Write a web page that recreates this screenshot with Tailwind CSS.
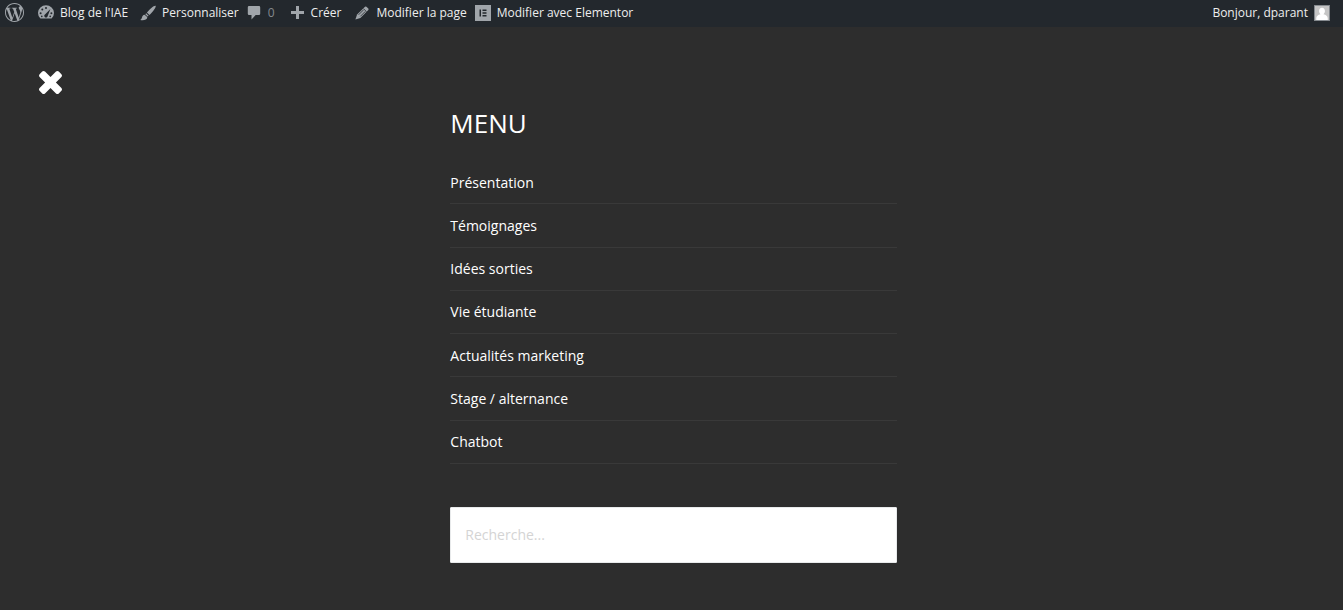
<!DOCTYPE html>
<html lang="fr">
<head>
<meta charset="utf-8">
<meta name="viewport" content="width=device-width, initial-scale=1">
<title>Blog de l'IAE</title>
<script src="https://cdn.jsdelivr.net/npm/@tailwindcss/browser@4"></script>
</head>
<body class="min-h-screen bg-[#2d2d2d] font-['Open_Sans','Noto_Sans',sans-serif] text-white">
<header class="flex h-[27px] items-center justify-between bg-[#23282d] pr-[13px] pl-[5px] text-[12px] leading-[26px] text-[#eee]">
  <nav aria-label="Administration" class="flex h-full items-center whitespace-nowrap">
    <a href="#" aria-label="WordPress" class="mr-[14px] block pb-[2px]">
      <svg class="size-[19px] fill-[#a0a5aa]" viewBox="0 0 24 24"><path d="M21.469 6.825c.84 1.537 1.318 3.3 1.318 5.175 0 3.979-2.156 7.456-5.363 9.325l3.295-9.527c.615-1.54.82-2.771.82-3.864 0-.405-.026-.78-.07-1.11m-7.981.105c.647-.03 1.232-.105 1.232-.105.582-.075.514-.93-.067-.899 0 0-1.755.135-2.88.135-1.064 0-2.85-.15-2.85-.15-.585-.03-.661.855-.075.885 0 0 .54.061 1.125.09l1.68 4.605-2.37 7.08L5.354 6.9c.649-.03 1.234-.1 1.234-.1.585-.075.516-.93-.065-.896 0 0-1.746.138-2.874.138-.2 0-.438-.008-.69-.015C4.911 3.15 8.235 1.215 12 1.215c2.809 0 5.365 1.072 7.286 2.833-.046-.003-.091-.009-.141-.009-1.06 0-1.812.923-1.812 1.914 0 .89.513 1.643 1.06 2.531.411.72.89 1.643.89 2.977 0 .915-.354 1.994-.821 3.479l-1.075 3.585-3.9-11.61.001.014zM12 22.784c-1.059 0-2.081-.153-3.048-.437l3.237-9.406 3.315 9.087c.024.053.05.101.078.149-1.12.393-2.325.609-3.582.609M1.211 12c0-1.564.336-3.05.935-4.39L7.29 21.709C3.694 19.96 1.212 16.271 1.211 12M12 0C5.385 0 0 5.385 0 12s5.385 12 12 12 12-5.385 12-12S18.615 0 12 0"/></svg>
    </a>
    <a href="#" class="mr-3 flex h-full items-center gap-[6px] pb-[2px]">
      <svg class="h-4 w-4" viewBox="0 0 16 16"><path fill="#a0a5aa" d="M2.2 13.200A8 7.600 0 1 1 13.800 13.200Q13.500 13.600 13 13.600H3Q2.500 13.600 2.200 13.200z"/><g fill="#23282d"><circle cx="8" cy="3" r="1"/><circle cx="4.3" cy="4.5" r="1"/><circle cx="2.6" cy="8.2" r="1"/><circle cx="13.4" cy="8.2" r="1"/><circle cx="3.8" cy="11.4" r=".8"/><circle cx="12.2" cy="11.4" r=".8"/><path d="M12.4 3.900 9.6 11.200A1.7 1.7 0 1 1 7 9.400z"/></g></svg>
      <span>Blog de l'IAE</span>
    </a>
    <a href="#" class="mr-2 flex h-full items-center gap-[6px] pb-[2px]">
      <svg class="h-4 w-4 fill-[#a0a5aa]" viewBox="0 0 16 16"><path d="M15.6.8C14.6-.1 9.600 4 6.900 7.500L9.400 10C12.800 6.800 16.500 1.800 15.600.8zM6.200 8.300 8.600 10.700 7.700 11.600 5.300 9.300zM4.600 9.800C2.900 9.800 2.300 11.200 2 12.600 1.700 13.700 1.100 14.500.3 14.900 3 15.600 7.600 15 7.200 12.100z"/></svg>
      <span>Personnaliser</span>
    </a>
    <a href="#" aria-label="0 commentaire" class="mr-4 flex h-full items-center gap-[7px] pb-[2px]">
      <svg class="h-[15px] w-[14px] fill-[#a0a5aa]" viewBox="0 0 14 15"><path d="M2 1h10q1.200 0 1.200 1.300v6.500Q13.200 10 12 10H8.700L4.500 14.500V10H2Q.8 10 .8 8.800V2.300Q.8 1 2 1z"/></svg>
      <span class="text-[#84898e]">0</span>
    </a>
    <a href="#" class="mr-[14px] flex h-full items-center gap-[7px] pb-[2px]">
      <svg class="size-[13px] fill-[#a0a5aa]" viewBox="0 0 13 13"><path d="M5 0h3v5h5v3H8v5H5V8H0V5h5z"/></svg>
      <span>Créer</span>
    </a>
    <a href="#" class="mr-2 flex h-full items-center gap-[7px] pb-[2px]">
      <svg class="size-[14px]" viewBox="0 0 14 14"><path fill="#a0a5aa" d="M10 .7q.7-.6 1.400 0l1.900 1.900q.6.700 0 1.400L5.400 11.900.4 13.600 2.100 8.600z"/><path stroke="#23282d" stroke-width=".8" fill="none" d="M8.400 2.600 11.400 5.600M3.600 8.800 8.700 3.700M5.300 10.400 10.300 5.400"/></svg>
      <span>Modifier la page</span>
    </a>
    <a href="#" class="flex h-full items-center gap-[6px] pb-[2px]">
      <svg class="size-4" viewBox="0 0 16 16"><path fill="#a0a5aa" d="M0 0h16v16H0z"/><path fill="#23282d" d="M4.500 4.500H6v7H4.500zM7.500 4.500h4V6h-4zM7.500 7.300h4v1.400h-4zM7.500 10h4v1.500h-4z"/></svg>
      <span>Modifier avec Elementor</span>
    </a>
  </nav>
  <a href="#" class="flex h-full items-center gap-[6px] pb-[2px]">
    <span>Bonjour, dparant</span>
    <svg class="size-4" viewBox="0 0 17 17"><path fill="#82878c" d="M0 0h17v17H0z"/><path fill="#c5c5c5" d="M1 1h15v15H1z"/><path fill="#fff" d="M8.500 3c2 0 3.100 1.500 3.100 3.400 0 1.300-.6 2.600-1.500 3.300 2.700.6 4.400 2 4.500 4.400V16H2.400v-1.900C2.500 11.700 4.200 10.300 6.900 9.700 6 9 5.400 7.700 5.400 6.400 5.400 4.500 6.500 3 8.500 3z"/></svg>
  </a>
</header>
<main class="pb-12">
  <div class="h-[73px] pt-11 pl-[39px]">
    <button type="button" aria-label="Fermer le menu" class="block">
      <svg class="size-[23px] fill-white" viewBox="0 0 23 23"><path d="M22.400 17q.6.700.6 1.400t-.6 1.400l-2.600 2.600q-.7.600-1.400.6t-1.400-.6L11.500 16.900 6 22.400q-.7.600-1.400.6t-1.400-.6L.6 19.800Q0 19.100 0 18.400T.6 17l5.500-5.500L.6 6Q0 5.300 0 4.600T.6 3.200L3.200.6Q3.900 0 4.600 0T6 .6l5.500 5.500L17 .6Q17.700 0 18.400 0t1.400.6l2.600 2.600q.6.700.6 1.400T22.400 6l-5.500 5.500z"/></svg>
    </button>
  </div>
  <div class="pl-1">
    <div class="mx-auto w-1/3">
      <h1 class="text-[26px] leading-[46px]">MENU</h1>
      <nav aria-label="Menu" class="mt-[15px] grid h-[303px] auto-rows-fr text-[14px]">
        <a href="#" class="flex items-center border-b border-[#393939]">Présentation</a>
        <a href="#" class="flex items-center border-b border-[#393939]">Témoignages</a>
        <a href="#" class="flex items-center border-b border-[#393939]">Idées sorties</a>
        <a href="#" class="flex items-center border-b border-[#393939]">Vie étudiante</a>
        <a href="#" class="flex items-center border-b border-[#393939]">Actualités marketing</a>
        <a href="#" class="flex items-center border-b border-[#393939]">Stage / alternance</a>
        <a href="#" class="flex items-center border-b border-[#393939]">Chatbot</a>
      </nav>
      <form class="mt-[43px]">
        <input type="search" aria-label="Recherche" placeholder="Recherche..." class="block h-14 w-full rounded-[1px] border border-[#e8eaeb] bg-white px-[14px] pb-[2px] text-[14px] text-[#333] placeholder:text-[#d4d4d4]">
      </form>
    </div>
  </div>
</main>
</body>
</html>
